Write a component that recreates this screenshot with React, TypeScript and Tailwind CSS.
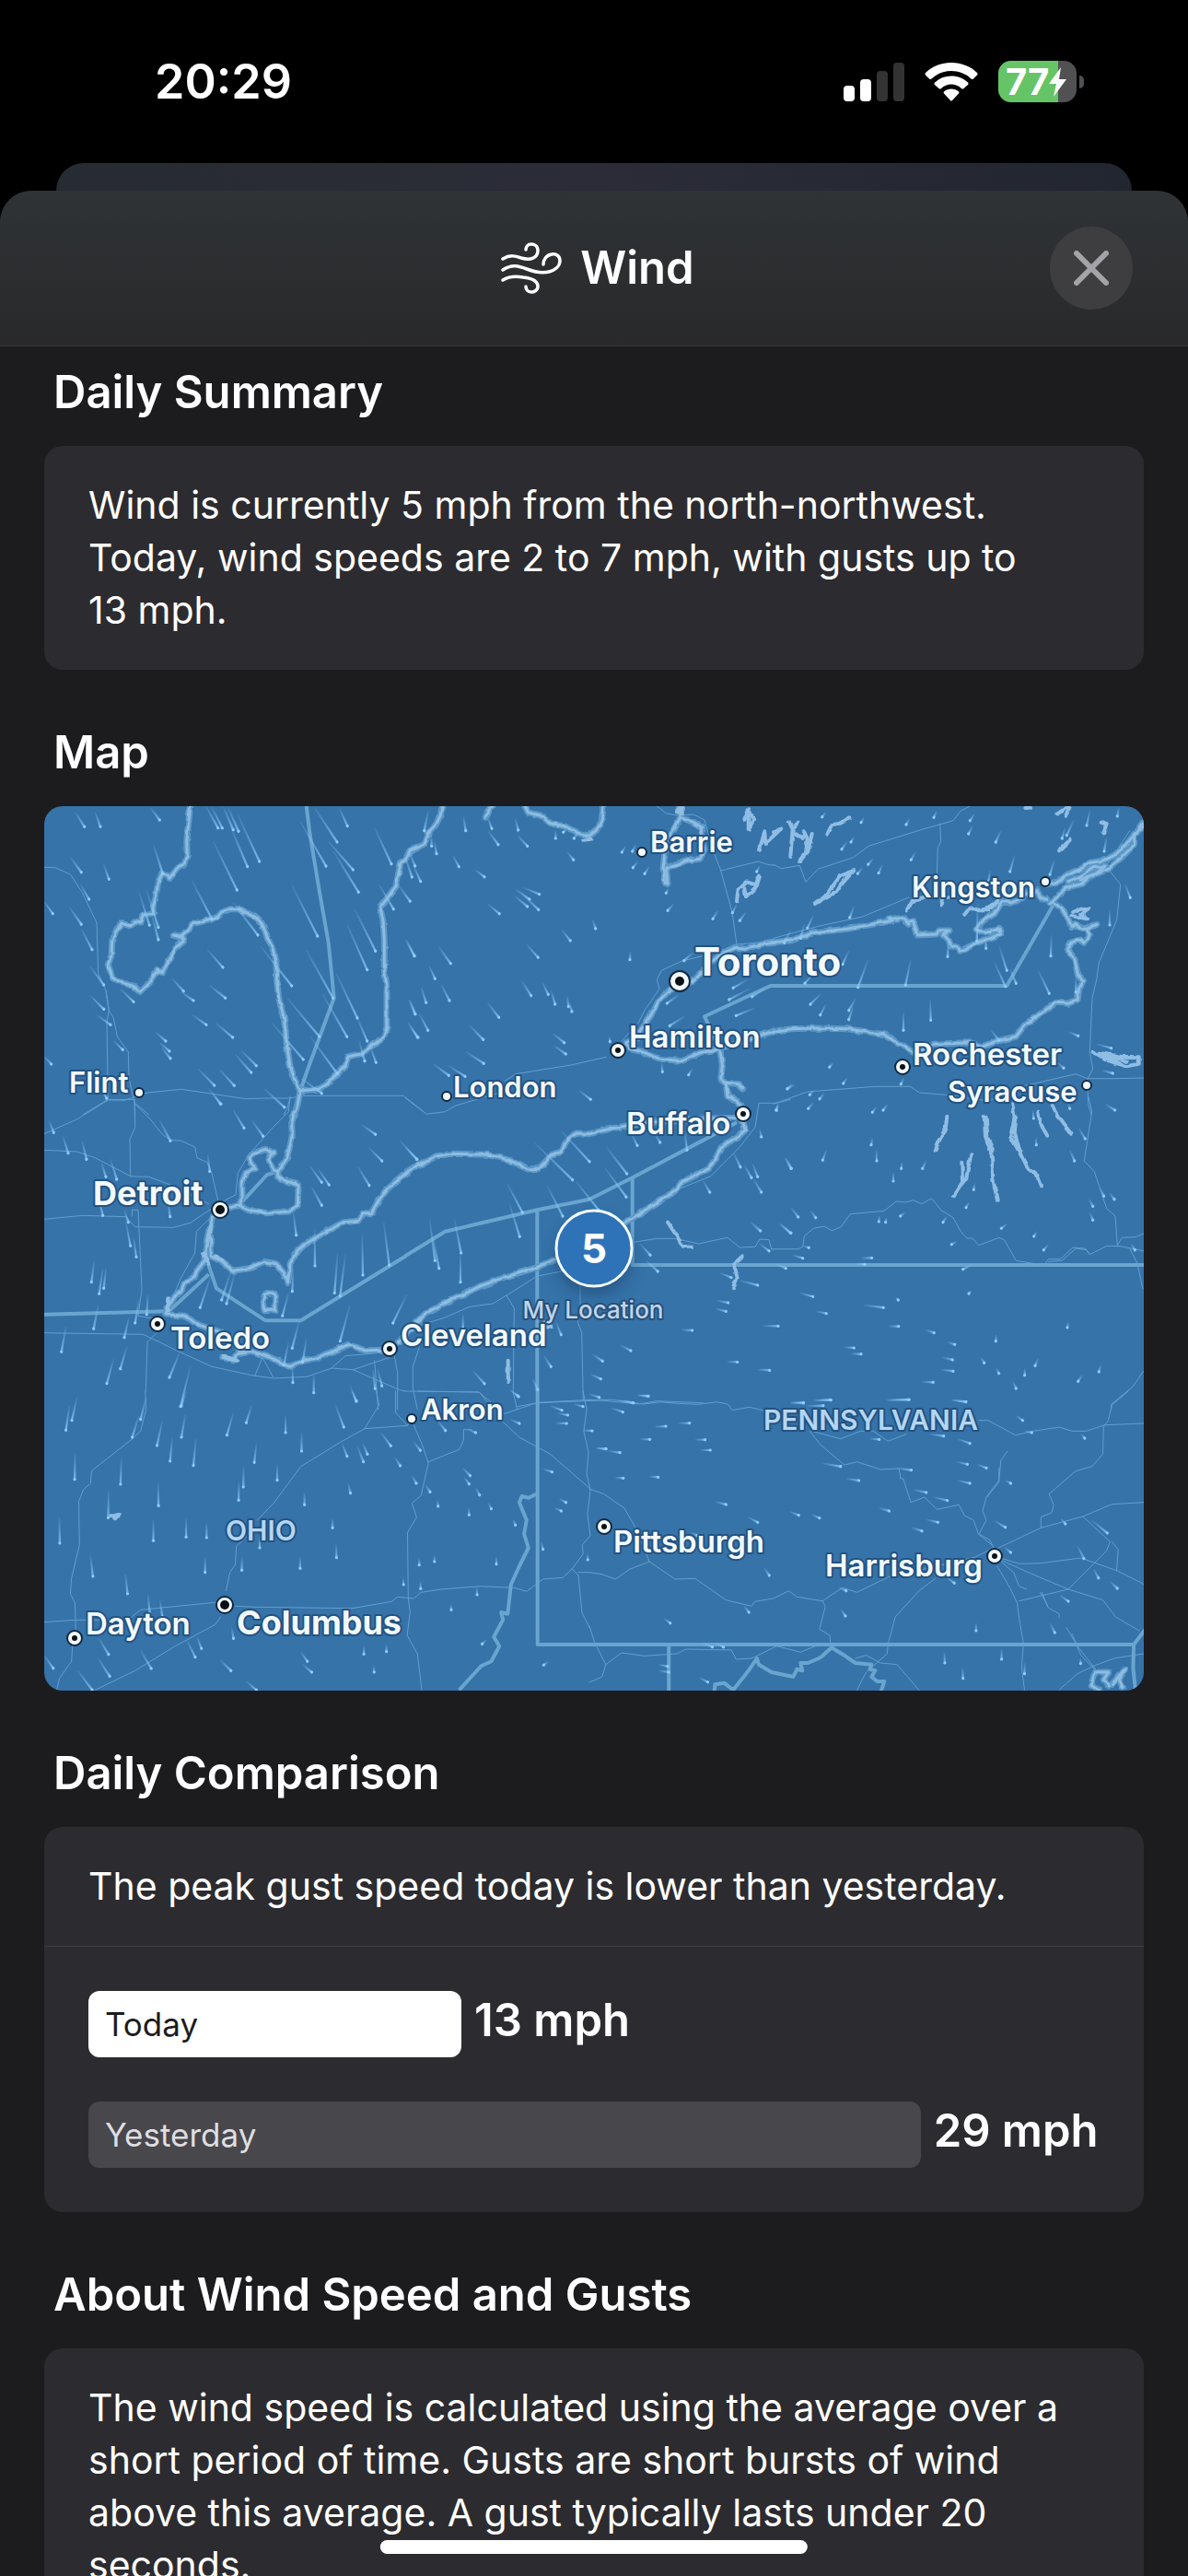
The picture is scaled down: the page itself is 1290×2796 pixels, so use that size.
import React from 'react';

interface Tile {
  x: number;
  y: number;
  sx: number;
  sy: number;
  coasts: string[];
  borders: string[];
  roads: string[];
  lakes: string[];
  streaks: string;
}

interface City {
  name: string;
  x: number;
  y: number;
  size: number;
  weight: number;
  dotX: number;
  dotY: number;
  dotR: number;
}

// The wind map is stored as eight tiles, each with its own origin and scale
const tiles: Tile[] = [
  {
    x: -8,
    y: -5,
    sx: 3,
    sy: 3,
    coasts: [
      '500,15 493,80 488,130 490,175 480,205 465,210 432,250 425,238 408,235 395,262 388,310 378,345 380,362 345,370 338,396 320,392 305,405 275,397 258,420 245,455 243,500 232,530 245,570 275,590 312,600 335,620 365,590 392,550 410,555 430,520 450,480 478,455 472,442 445,435 470,438 495,415 505,400 570,382 590,375 603,360 630,350 655,350 690,365 715,378 735,400 750,440 768,480 780,530 782,590 790,650 805,700 815,800 825,860 840,905 858,942',
      '858,942 920,935 945,920 975,890 1005,860 1015,830 1055,822 1100,790 1130,765 1140,735 1140,600 1132,550 1132,450 1128,390 1118,345 1145,310 1170,275 1185,200 1200,190 1215,160 1240,150 1262,140 1275,105 1300,75 1315,45 1320,15',
    ],
    borders: ['878,15 890,110 920,290 950,460 968,640 885,865 858,942'],
    roads: [
      '24,214 60,215 110,238 150,300 195,395 200,560 225,615 235,680 250,705 262,765 298,815 300,900 318,980 320,1020',
      '225,615 235,680 228,720 232,970 285,973 318,962 360,948 470,937 560,950 680,968 740,966 825,966 865,958 1195,958 1260,1010',
      '232,970 150,1020',
      '318,980 365,1020',
      '825,966 815,1000 805,1020',
    ],
    lakes: [],
    streaks:
      '125,35,155,82 190,35,207,82 370,20,400,60 552,18,590,86 570,18,604,86 608,18,640,92 622,18,657,97 630,80,686,212 655,45,725,195 575,130,652,288 380,140,410,235 110,182,145,230 218,205,235,253 142,270,170,318 24,325,52,365 107,345,145,400 145,415,180,482 333,295,367,403 358,290,396,410 375,370,396,450 505,258,570,382 640,330,720,435 555,482,606,540 728,470,830,600 905,20,978,132 985,20,1012,80 858,65,942,210 950,130,1030,222 965,160,1048,295 1100,85,1155,203 1115,270,1162,350 1180,275,1216,325 1200,180,1222,246 1225,205,1250,260 1215,170,1232,210 830,270,914,438 1035,350,1103,487 1010,400,1076,548 878,485,965,640 975,560,1044,705 1205,450,1230,503 172,535,218,597 172,630,218,676 195,695,240,727 250,780,280,808 272,610,315,652 440,575,478,617 470,620,510,648 562,598,614,640 507,695,552,727 583,722,638,768 386,750,420,780 400,785,432,813 405,800,435,836 525,870,578,924 595,872,643,925 645,822,698,882 665,810,715,860 765,720,868,840 815,640,920,765 930,625,1010,766 1044,705,1076,780 890,765,978,885 1085,795,1105,850 1050,780,1068,845 740,935,806,995 560,935,600,985 860,900,928,950 1212,645,1232,692 1215,730,1242,768 24,830,47,855 200,920,227,966',
  },
  {
    x: 392,
    y: -5,
    sx: 3,
    sy: 3,
    coasts: [
      '262,52 270,30 285,15',
      '390,15 400,35 440,45 475,72 520,80 560,102 600,112 625,92 640,62 645,15',
      '895,15 897,50 875,90 850,130 845,175 840,215 845,265 855,268 850,215 885,205 920,192 960,187 975,155 965,125 968,85 940,68 905,55',
      '1205,460 1160,465 1110,478 1075,475 1040,490 1000,520 960,560 930,590 860,615 825,650 805,690 780,725 755,770 720,785 735,805 780,818 830,838 900,845 960,818 1020,805 1100,780 1160,760 1202,748',
      '1025,805 1033,860 1028,905 1045,920 1050,960 1080,975 1098,995',
      '1045,915 1085,920 1100,935',
    ],
    borders: ['1202,600 1190,600 1120,632 975,700 985,720 1020,800'],
    roads: [
      '820,15 850,38 885,45 940,42 975,60 1000,150 1028,225 1065,360 1080,465',
      '1028,225 1150,195 1180,205 1200,208',
      '1080,465 1160,458 1200,447',
      '1080,475 900,520 835,550 820,580 828,610 780,680 760,720 705,780',
      '655,832 540,858 360,887 325,910',
      '300,950 165,990 130,1010 70,1018 0,965',
    ],
    lakes: [
      '1080,325 1085,285 1110,262 1140,270 1155,242 1145,275 1110,310 1105,280',
      '1105,60 1120,25 1135,60 1118,90 1118,40',
      '1155,155 1170,100 1175,135 1225,88',
      '885,35 905,20 905,40',
      '580,125 605,122',
    ],
    streaks:
      '75,30,62,95 190,48,197,95 268,50,282,88 358,55,368,93 85,110,86,145 95,130,102,170 270,95,303,140 365,110,398,145 155,175,175,212 228,222,258,245 528,165,548,190 385,280,437,302 358,285,405,318 357,308,398,342 385,305,434,352 270,335,307,365 610,385,620,414 510,418,538,453 395,465,433,508 0,450,30,502 108,472,148,527 78,535,97,577 117,595,144,648 52,605,68,655 15,645,33,692 45,690,74,745 10,720,40,768 733,488,732,515 380,585,410,632 447,590,466,628 475,615,488,660 528,635,532,668 535,655,543,684 268,655,305,703 208,728,254,775 198,815,256,853 92,855,142,892 140,860,195,895 480,755,518,785 485,795,523,822 565,940,604,970 665,765,667,782 718,145,706,165 752,140,740,162 758,195,742,215 795,212,780,235 858,283,850,298 875,333,855,355 1020,355,1002,382 1110,360,1090,388 1155,210,1145,228 1080,335,1066,362 940,490,908,518 1115,580,1068,607 890,630,853,657 910,700,862,730 1140,672,1078,697 1170,610,1130,635 1120,610,1055,645 835,850,838,880 935,870,923,890 1260,920,1245,935 490,95,490,120 530,88,515,100 560,105,550,120',
  },
  {
    x: 792,
    y: -5,
    sx: 3,
    sy: 3,
    coasts: [
      '0,458 60,452 90,440 140,425 240,415 310,402 385,388 375,378 400,385 425,378 440,400 430,392 455,392 470,435 530,432 540,420 570,420 555,435 570,450 580,475 595,472 610,487 650,465 740,432 735,412 705,425 660,420 680,390 720,365 745,325 775,330 810,318 815,300 860,290 870,318 890,318',
      '890,270 930,260 950,240 1000,220 1030,200 1080,190 1110,175 1150,140 1205,65',
      '900,330 940,300 950,280 1000,270 1030,245 1090,220 1130,185 1175,140 1175,110 1205,75',
      '960,260 1000,245 1040,215 1080,210 1050,235 1000,255',
      '915,330 940,350 960,385 970,410 985,400 1010,415 1050,400 1020,415 1030,435 1010,460 1000,450 965,460 955,480 980,510 990,560 1010,585 995,610 990,645 960,658 920,655 870,690 820,725 790,765 730,780 680,798 640,785 520,790 460,820 430,800 380,770 360,758 240,740 130,738 60,740 0,748',
    ],
    borders: ['0,600 760,600 915,330'],
    roads: [
      '0,205 25,218 85,208 105,262 145,220 260,182 310,145 480,92 585,62 610,30 640,15',
      '542,72 545,130 535,150 532,240',
      '0,445 150,405 290,375 440,312',
      '1090,220 1130,270 1118,385 1060,525 1052,580 1038,640 1030,815 1040,870 1022,905 1025,985 1035,1020',
      '0,985 110,945 330,928 445,928 475,948 560,955 700,975 820,925 985,887 1022,902 1110,902 1205,900',
      '1080,215 1160,95',
    ],
    lakes: [
      '135,333 175,300 215,245 262,225 225,265 205,295 160,320 135,333',
      '175,107 190,75 215,72 250,55',
      '50,65 62,90 55,180',
      '78,65 62,100 95,120 100,100 110,120 105,170 85,195',
      '110,170 125,105',
      '0,100 18,90',
      '435,352 450,325 490,315',
      '622,368 640,345 660,355 690,350 730,325 700,355 670,355',
      '545,338 550,315 575,310',
      '975,360 1000,350 1025,352 1000,370 1020,382 970,372',
      '925,40 950,22 965,20 950,48',
      '1067,68 1085,75 1075,103',
      '930,160 965,125 940,155',
      '1040,815 1080,840 1150,862 1190,855 1190,832 1130,830 1060,818 1080,832 1150,845',
      '820,18 840,20',
    ],
    streaks:
      '170,35,158,50 295,52,285,68 263,115,252,132 240,130,222,155 443,55,432,75 532,30,522,52 655,40,640,62 648,80,635,105 740,95,724,132 462,165,448,190 325,185,308,205 290,215,274,235 355,205,342,233 785,175,770,228 705,225,700,260 263,340,248,378 130,370,110,412 1030,30,1020,78 1125,20,1120,48 978,60,955,110 950,85,940,120 1085,115,1077,162 915,190,900,238 1145,270,1162,313 1095,355,1095,402 905,435,903,503 735,470,760,550 720,525,755,602 770,545,790,592 862,550,898,625 308,515,275,605 447,515,430,598 130,560,102,592 245,485,225,530 155,625,120,660 170,660,152,695 268,640,245,680 260,665,245,710 510,645,512,712 423,685,423,745 708,745,735,778 960,750,992,763 1052,790,1100,803 925,850,945,868 1070,875,1105,885 195,850,182,865 240,900,227,918 425,900,415,920 70,920,45,935 130,940,118,955 165,950,150,968 960,985,965,1000 665,330,662,455 570,450,567,505 690,430,692,478 55,420,35,460 100,400,88,445 985,570,985,620',
  },
  {
    x: -8,
    y: 315,
    sx: 3,
    sy: 3,
    coasts: [
      '858,-18 850,25 830,85 832,130 815,200 785,245',
      '785,245 770,240 755,205 770,185 745,172 705,185 692,200 710,235 680,250 668,285 670,330 658,355 690,370 750,380 820,375 850,355 852,290 840,285 820,278 800,272 785,262 785,245',
      '658,355 620,365 575,390 560,440 550,500 552,530',
      '572,400 565,450 568,520',
      '560,440 552,480 545,540',
      '568,520 590,530 640,568 690,560 740,538 780,545 800,570 818,605 825,545 850,500 900,465 970,425 1000,410 1050,405 1065,380 1090,380 1115,335 1150,295 1220,235 1260,215',
      '552,530 535,550 520,570 515,585 480,610 470,635 450,650 425,690 420,710 480,715 530,745 590,765 640,790 660,830 700,830 760,850 825,880 870,860 920,850 1015,808 1070,828 1130,825',
      '605,850 640,860 650,840 680,835',
      '742,645 775,640 778,695 742,698 735,670 742,645',
      '1180,800 1240,740 1260,715',
    ],
    borders: ['24,710 420,700 435,695 560,580', '558,545 585,625 745,730 860,730 1202,520', '658,355 750,255 785,245'],
    roads: [
      '24,122 130,75 232,12 318,10',
      '24,175 130,180 190,200 305,260 365,262 440,290 560,350',
      '318,10 320,100 303,140 305,260',
      '320,25 370,75 410,125 435,142 470,145 515,165 522,200 555,215 570,250 590,340',
      '825,0 820,50 770,100 690,190 655,250 648,320 600,345',
      '24,400 150,388 290,392 320,425 445,427 500,412 540,385 570,365',
      '310,390 310,370 330,370 342,630 330,715 390,725',
      '575,385 520,440 515,510 470,590 440,660',
      '24,770 345,775 400,800 450,825 570,880 700,908 770,918 880,913 960,885 1030,890 1150,850',
      '390,770 360,800 355,960',
      '710,910 735,850 770,915',
      '960,885 1005,845 1120,835',
      '1030,890 1180,955 1200,960',
      '1100,860 1112,1020',
      '1165,845 1175,900 1175,1020',
    ],
    lakes: ['540,515 560,545', '585,520 600,535', '430,655 428,700', '610,845 655,862'],
    streaks:
      '40,80,55,118 85,130,102,185 147,145,162,205 210,215,225,262 240,205,260,270 198,320,215,388 285,370,298,410 428,345,434,392 290,410,305,487 315,460,324,523 400,78,435,145 557,190,563,245 578,0,598,25 640,45,675,103 700,78,737,130 1057,92,1103,124 1080,165,1124,210 1183,145,1238,205 1045,228,1083,290 888,225,928,280 915,235,952,288 895,295,928,355 835,375,845,452 905,430,906,552 1060,450,1062,582 1130,410,1148,550 980,510,970,640 1005,515,988,650 835,560,832,635 820,640,800,715 565,590,532,688 630,575,602,663 645,575,618,675 187,535,178,605 215,560,203,643 225,560,218,625 200,680,185,757 362,645,358,710 333,660,320,738 95,750,80,832 300,720,285,785 293,815,272,887 250,855,228,935 465,835,432,915 500,880,468,1010 1020,680,988,797 1205,645,1160,738 855,730,832,820 820,800,805,875 878,790,866,865 833,885,834,932 902,905,902,965 1022,945,1040,993 1095,890,1102,952 1110,890,1124,943',
  },
  {
    x: 392,
    y: 315,
    sx: 3,
    sy: 3,
    coasts: [
      '50,225 100,195 150,187 270,190 340,208 400,237 435,235 460,210 475,190 490,185 510,182 520,155 535,135 560,120 600,122 640,112 720,95 800,85 900,75 1000,72 1075,70 1098,60',
      '1098,80 1108,110 1080,135 1030,165 1015,195 990,235 950,255 900,280 885,300 860,320 790,365 715,412',
      '490,530 420,560 320,590 240,620 180,650 115,680 70,705 35,735',
    ],
    borders: ['0,520 130,440 430,370 600,335 740,265 1080,85', '430,370 430,960', '740,265 740,549 1202,549'],
    roads: [
      '1255,10 1210,22 1152,22 1140,100 1090,165 995,260 900,298 715,415',
      '745,475 820,463 880,463 955,480 1050,460 1090,492 1140,490 1155,465 1185,467 1193,498 1202,497',
      '570,615 570,680 562,735 575,770 580,990',
      '50,745 130,720 210,685 285,675 335,645 430,585 520,568',
      '330,648 355,690 352,965 365,1020',
      '0,960 240,963 290,1005',
      '365,1010 430,998 640,990 760,1002 820,992 970,998',
      '45,820 25,880 25,950 40,1020',
    ],
    lakes: ['855,410 885,455 905,488 935,488', '1097,522 1070,545 1082,590 1068,625', '335,860 335,930', '450,745 478,750 455,735'],
    streaks:
      '0,165,38,205 420,150,545,272 508,112,600,212 655,165,722,252 650,232,720,328 738,125,756,160 815,125,830,150 910,110,918,175 555,275,630,370 462,290,513,390 333,285,382,378 340,350,373,457 80,400,97,535 90,455,110,560 160,400,182,510 180,510,180,605 1155,108,1160,132 1070,185,1092,230 1105,225,1128,265 1132,220,1148,262 1135,270,1160,312 970,275,992,312 1238,200,1258,235 1125,410,1157,438 1220,415,1255,445 1155,480,1185,503 765,480,798,517 785,535,823,570 1205,545,1240,560 1025,575,1062,590 1090,600,1148,615 1015,665,1052,672 1012,692,1045,700 1165,748,1215,748 900,760,935,762 1048,865,1082,865 1148,890,1187,892 700,810,735,828 610,840,643,862 605,905,637,920 188,710,188,755 492,735,508,776 452,845,475,880 220,893,258,935 415,920,432,955 340,955,367,975 600,970,632,980 755,975,790,976 710,990,743,998 1215,25,1210,45',
  },
  {
    x: 792,
    y: 315,
    sx: 3,
    sy: 3,
    coasts: [],
    borders: ['0,549 1230,549'],
    roads: [
      '0,497 80,497 95,490 100,455 130,430 165,423 190,437 220,425 250,383 360,373 400,342 430,345 455,338 482,350 515,332 545,370 585,395 610,440 630,462 648,462 668,485 735,460 752,468 790,535 870,548 885,545 895,530 935,530 975,492 1015,495 1030,515 1085,487 1130,488 1205,503',
      '895,538 940,535 985,495 1020,500 1030,515',
      '1025,0 1037,48 1012,210 1045,245 1085,365 1113,390 1120,485 1135,460 1180,458 1205,447',
      '1160,495 1185,545 1203,627',
      '1205,895 1170,945 1100,1003 1100,1020',
    ],
    lakes: [
      '565,65 560,105 540,140 527,178',
      '643,190 628,265 610,290 588,325',
      '613,215 615,275',
      '686,65 690,130 710,185 715,270 728,335',
      '692,65 697,130 715,180',
      '778,25 785,70 772,130 800,180 825,230 860,258 873,292',
      '790,70 785,120 803,180',
      '862,50 870,90 892,128',
      '908,30 925,65 970,122',
    ],
    streaks:
      '15,25,8,45 130,20,113,40 335,35,322,52 372,25,357,45 1080,25,1112,45 322,135,318,158 172,175,160,208 38,200,57,235 335,175,336,210 418,215,416,235 498,210,485,235 390,248,390,276 57,362,80,393 122,373,137,395 22,415,57,445 345,388,343,408 368,395,365,410 428,378,413,390 565,390,552,410 597,472,580,482 760,415,742,430 858,440,848,456 895,482,880,500 655,283,652,304 637,345,627,362 62,517,95,527 97,487,115,493 285,527,320,526 268,547,297,547 650,547,617,563 645,633,636,642 85,640,128,652 140,700,172,707 398,655,406,663 295,680,358,688 375,748,407,749 228,817,262,819 252,838,285,839 495,760,523,770 568,800,590,808 550,850,583,858 547,890,585,895 483,930,520,931 725,775,724,797 960,735,957,753 675,850,686,868 725,885,734,902 818,885,818,908 862,855,852,877 1066,875,1060,897 1005,908,992,928 780,930,790,951 135,990,187,989 55,998,97,999 368,990,440,988 580,990,627,994 855,135,856,158 845,45,847,72 995,105,1015,138 965,175,980,210 1028,335,1040,358 1030,378,1040,403 1095,315,1110,335 1065,300,1076,325 1165,480,1177,500',
  },
  {
    x: -8,
    y: 635,
    sx: 2.529,
    sy: 3,
    coasts: [],
    borders: [
      '1375,0 1375,825 1518,825',
      '1372,335 1350,347 1332,342 1325,362 1345,420 1338,465 1350,510 1325,570 1302,630 1293,725 1275,720 1280,745 1255,800 1270,830 1248,880 1220,895 1160,973',
    ],
    roads: [
      '298,0 300,60 285,130 262,155 150,260 148,300 128,320 115,360 117,500 95,610 92,660 105,690 107,780',
      '98,830 95,880 62,935 55,973',
      '20,752 107,745 250,745 285,712 490,688',
      '545,700 600,703 865,707 975,685 990,670 1035,675 1055,655 1110,645 1220,635 1310,640 1345,652 1390,612 1445,607 1470,578 1500,530 1498,500 1520,470 1512,400 1520,320 1510,270 1515,200 1502,130 1510,60 1500,0',
      '520,650 530,590 545,565 548,505 580,470',
      '605,420 650,365 725,245 835,165 900,122 1018,112 1025,95',
      '900,122 940,45 932,0',
      '505,735 490,760 380,830 270,910 160,973',
      '1035,110 1060,180 1075,235 1055,340 1030,365 1043,410 1018,460 1020,675 1025,720 1017,795 1045,855 1057,973',
      '1075,230 1160,190 1172,160 1172,125 1195,125',
      '1280,75 1375,37 1520,28',
      '1280,100 1325,150 1410,205 1520,318',
      '1470,578 1487,600 1497,720 1518,770',
      '1487,590 1518,590',
      '985,0 985,70 1018,112',
      '1045,0 1215,3 1240,40',
    ],
    lakes: ['203,408 225,402 215,415 205,405'],
    streaks:
      '90,45,80,127 110,20,96,95 300,20,285,92 280,80,262,150 410,0,397,48 590,45,575,103 540,70,522,143 345,95,330,177 408,75,397,150 372,150,366,228 437,155,430,242 683,80,683,135 820,45,843,117 865,0,878,32 727,135,727,195 603,170,597,232 838,170,852,212 105,200,104,287 232,220,230,303 880,180,897,230 895,170,908,205 945,135,972,178 983,215,998,243 568,245,567,312 660,240,660,290 555,295,554,355 333,300,334,373 735,330,735,370 855,300,861,332 197,325,196,412 62,410,63,495 320,420,320,487 410,415,410,475 466,430,466,477 812,415,812,445 822,500,823,542 723,540,723,577 563,540,563,583 462,540,462,590 612,470,612,510 147,535,154,603 243,595,249,660 305,660,310,722 338,680,345,735 535,770,540,805 170,805,197,857 440,800,452,838 412,810,435,866 285,845,314,903 503,875,533,910 725,850,743,880 730,890,755,915 168,870,200,928 112,910,152,973 20,860,45,902 575,945,603,973 898,830,898,856 960,825,960,848 925,895,926,915 1100,95,1122,128 1035,165,1053,193 1030,275,1042,300 1170,250,1190,275 1173,280,1187,302 1205,315,1216,338 1068,305,1080,328 1100,355,1102,375 1186,380,1187,403 1240,365,1248,383 1050,545,1050,566 1092,535,1092,555 1262,540,1262,563 1006,610,1007,630 1053,620,1054,643 1208,640,1209,663 1385,490,1390,515 1308,418,1314,436 1137,695,1138,712 1512,530,1513,549 1410,48,1442,62 1430,72,1458,78 1425,104,1455,105 1500,128,1525,129 1535,185,1562,188 1390,253,1415,263 1435,350,1453,362 1422,380,1440,390 1300,92,1325,105 1185,125,1205,135 1475,42,1500,50 1310,5,1323,18 1235,810,1223,823 1405,880,1392,892',
  },
  {
    x: 592,
    y: 635,
    sx: 2.529,
    sy: 3,
    coasts: ['1400,973 1378,955 1390,915 1425,915 1412,940 1425,960', '1435,955 1470,905 1455,940 1465,965'],
    borders: [
      '0,825 1495,825 1530,770',
      '1495,825 1493,900 1500,980',
      '218,825 218,980',
      '343,980 345,955 370,950 395,973 440,905 460,870 465,890 500,915 560,930 570,905 585,910 580,885 600,885 630,870 640,862 665,835 700,860 730,885 775,890 770,905 785,910 775,930 790,945 810,945 800,980',
    ],
    roads: [
      '0,28 65,28 150,42 195,35 240,40 300,43 350,35 380,42 392,62 440,52 485,65',
      '0,590 30,595 72,612 110,580 165,555 235,612 290,610 375,680 445,700 455,685 505,675 547,650 570,670 640,683 695,640 735,655 830,600 900,585 1060,540 1110,510',
      '0,318 40,335 95,380 125,440 165,555',
      '605,130 635,175 700,240 735,230 800,255 850,252 855,285 862,285 883,362 920,345 955,385 1015,370 1030,405 1055,420 1068,465 1105,500',
      '610,130 690,155 745,130 780,130 820,163 870,140',
      '1070,95 1095,95 1170,143 1220,130 1290,117 1325,130 1365,130 1415,110 1522,105',
      '1480,0 1435,45 1425,95 1412,115 1410,205 1380,245 1335,260 1262,335 1275,370 1270,395 1240,410 1240,445',
      '1115,515 1240,445 1355,408 1435,368 1522,362',
      '1355,408 1430,490 1420,520 1315,645 1180,683',
      '1120,540 1180,562 1240,560 1350,543 1450,585 1522,628',
      '1435,490 1452,515 1448,585',
      '1120,545 1235,605 1315,645 1410,680 1445,735 1510,780',
      '1120,570 1155,640 1175,690 1180,740 1192,820 1187,900 1195,973',
      '950,610 905,650 840,735 820,825 818,855 760,915 735,973',
      '640,683 648,700 632,775 660,795 663,830',
      '0,765 15,820 45,890 35,930 0,948',
      '45,890 88,852 150,862 240,855 265,840 390,843 403,873 445,870 515,830 580,850 620,830 663,828',
      '730,870 760,860 800,885 845,890 905,973',
      '1290,973 1340,920 1385,895 1440,870 1522,855',
      '1148,195 1130,225 1125,290 1090,345 1080,390 1090,420 1070,465 1100,485 1112,515',
      '1130,555 1165,590 1180,635 1200,645',
      '1238,655 1255,690 1260,705 1290,725 1290,738',
      '1310,770 1335,820 1350,860 1390,910',
      '1325,790 1340,830 1390,905',
      '1243,655 1258,700',
      '1125,250 1125,295 1092,345',
    ],
    lakes: [],
    streaks:
      '60,55,92,68 245,104,275,104 180,116,210,114 552,38,588,37 595,48,642,47 615,30,662,28 815,28,878,27 995,28,1033,35 135,12,162,16 80,30,120,38 140,157,166,157 290,158,318,158 305,192,332,192 20,185,46,188 52,195,84,200 70,282,93,283 165,278,189,280 640,235,690,245 705,285,740,291 770,155,796,157 935,140,973,146 1010,155,1045,170 1010,230,1038,238 1065,238,1090,250 845,250,884,257 1010,290,1045,300 1142,290,1157,300 890,320,925,330 945,345,983,356 795,380,823,390 345,360,375,369 550,392,575,404 610,402,632,413 435,410,462,427 885,445,913,455 925,418,957,427 1113,422,1142,443 1172,80,1190,95 1195,130,1215,135 1350,140,1360,153 1295,415,1307,432 1380,420,1422,462 1340,503,1358,545 1140,508,1157,525 1385,580,1398,608 1430,620,1450,642 1292,665,1315,684 480,575,494,600 980,605,1002,625 685,640,705,650 690,710,703,732 425,700,438,720 205,740,222,755 1062,755,1062,780 1265,755,1278,786 1132,840,1132,873 975,850,976,885 1025,900,1026,935 1195,885,1195,920 1348,870,1349,887 310,820,338,833 345,818,368,833 190,890,215,896 190,910,218,915 302,933,325,947 280,460,296,470',
  },
];

const cities: City[] = [
  { name: 'Flint', x: 27, y: 311, size: 31, weight: 600, dotX: 103, dotY: 311, dotR: 5 },
  { name: 'Barrie', x: 658, y: 50, size: 31, weight: 600, dotX: 649, dotY: 50, dotR: 5 },
  { name: 'Kingston', x: 942, y: 99, size: 31, weight: 600, dotX: 1087, dotY: 82, dotR: 5 },
  { name: 'London', x: 444, y: 316, size: 31, weight: 600, dotX: 437, dotY: 315, dotR: 5 },
  { name: 'Syracuse', x: 981, y: 321, size: 31, weight: 600, dotX: 1132, dotY: 303, dotR: 5 },
  { name: 'Akron', x: 409, y: 666, size: 31, weight: 600, dotX: 399, dotY: 665, dotR: 5 },
  { name: 'Hamilton', x: 635, y: 262, size: 33, weight: 600, dotX: 623, dotY: 265, dotR: 8 },
  { name: 'Rochester', x: 943, y: 281, size: 33, weight: 600, dotX: 932, dotY: 283, dotR: 8 },
  { name: 'Buffalo', x: 632, y: 356, size: 33, weight: 600, dotX: 759, dotY: 334, dotR: 8 },
  { name: 'Toledo', x: 137, y: 589, size: 33, weight: 600, dotX: 123, dotY: 562, dotR: 8 },
  { name: 'Cleveland', x: 387, y: 586, size: 33, weight: 600, dotX: 375, dotY: 589, dotR: 8 },
  { name: 'Dayton', x: 45, y: 899, size: 33, weight: 600, dotX: 33, dotY: 903, dotR: 8 },
  { name: 'Pittsburgh', x: 618, y: 810, size: 33, weight: 600, dotX: 608, dotY: 782, dotR: 8 },
  { name: 'Harrisburg', x: 848, y: 836, size: 33, weight: 600, dotX: 1032, dotY: 814, dotR: 8 },
  { name: 'Detroit', x: 53, y: 433, size: 36, weight: 700, dotX: 191, dotY: 438, dotR: 9 },
  { name: 'Columbus', x: 209, y: 899, size: 36, weight: 700, dotX: 196, dotY: 867, dotR: 9 },
  { name: 'Toronto', x: 706, y: 184, size: 42, weight: 700, dotX: 690, dotY: 190, dotR: 11 },
];

const gusts = [
  { day: 'Today', speed: 13, barClass: 'bg-white text-[#1c1c1e]' },
  { day: 'Yesterday', speed: 29, barClass: 'bg-[#48474c] text-[#dedee0]' },
];

const maxGust = 29;

// Tile coordinates -> map coordinates
const project = (tile: Tile, line: string) =>
  line
    .split(' ')
    .map((pair) => {
      const [x, y] = pair.split(',').map(Number);
      return `${(x / tile.sx + tile.x).toFixed(1)},${(y / tile.sy + tile.y).toFixed(1)}`;
    })
    .join(' ');

const collect = (key: 'coasts' | 'borders' | 'roads' | 'lakes') =>
  tiles.flatMap((tile) => tile[key].map((line) => project(tile, line)));

const streaks = tiles.flatMap((tile) =>
  tile.streaks.split(' ').map((item) => {
    const [x1, y1, x2, y2] = item.split(',').map(Number);
    const dx = (x2 - x1) / tile.sx;
    const dy = (y2 - y1) / tile.sy;
    return {
      x: x2 / tile.sx + tile.x,
      y: y2 / tile.sy + tile.y,
      length: Math.hypot(dx, dy),
      angle: (Math.atan2(dy, dx) * 180) / Math.PI,
    };
  })
);

const Lines = ({ lines }: { lines: string[] }) => (
  <>
    {lines.map((points, i) => (
      <polyline key={i} points={points} />
    ))}
  </>
);

const WindMap = () => {
  const coasts = collect('coasts');
  const borders = collect('borders');
  const roads = collect('roads');
  const lakes = collect('lakes');

  return (
    <svg viewBox="0 0 1194 960" className="block w-full" role="img" aria-label="Wind map">
      <defs>
        <linearGradient id="tail" x1="0" y1="0" x2="1" y2="0">
          <stop offset="0" stopColor="#86c6f5" stopOpacity="0.1" />
          <stop offset="1" stopColor="#86c6f5" stopOpacity="0.8" />
        </linearGradient>
        <filter id="rough" x="0" y="0" width="1194" height="960" filterUnits="userSpaceOnUse">
          <feTurbulence type="fractalNoise" baseFrequency="0.1" numOctaves="2" seed="4" />
          <feDisplacementMap in="SourceGraphic" scale="4" xChannelSelector="R" yChannelSelector="G" />
        </filter>
        <filter id="soft" x="-50%" y="-50%" width="200%" height="200%">
          <feGaussianBlur stdDeviation="9" />
        </filter>
      </defs>

      <rect width="1194" height="960" fill="#3573a9" />

      <g fill="none" strokeLinejoin="round" strokeLinecap="round">
        <g stroke="#639fd0" strokeWidth="1">
          <Lines lines={roads} />
        </g>
        <g stroke="#6aa5cf" strokeWidth="4" strokeLinecap="butt">
          <Lines lines={borders} />
        </g>
        <g filter="url(#rough)">
          <g stroke="#5b98c8" strokeWidth="7">
            <Lines lines={coasts} />
          </g>
          <g stroke="#8dbce0" strokeWidth="3">
            <Lines lines={coasts} />
          </g>
          <g stroke="#8fbde4" strokeWidth="4">
            <Lines lines={lakes} />
          </g>
        </g>
      </g>

      {streaks.map((s, i) => (
        <g key={i} transform={`translate(${s.x.toFixed(1)} ${s.y.toFixed(1)}) rotate(${s.angle.toFixed(1)})`}>
          <path d={`M${-s.length.toFixed(1)} -0.8 L0 -1.2 L0 1.2 L${-s.length.toFixed(1)} 0.8 Z`} fill="url(#tail)" />
          <circle r="1.6" fill="#8fcdfb" />
        </g>
      ))}

      <g fontFamily="Inter, sans-serif" stroke="#24527f" strokeWidth="4" strokeLinejoin="round" paintOrder="stroke">
        <text x="197" y="797" fontSize="30" fontWeight="600" fill="#b3d6f3">
          OHIO
        </text>
        <text x="781" y="677" fontSize="30" fontWeight="600" fill="#b3d6f3">
          PENNSYLVANIA
        </text>
        {cities.map((city) => (
          <text key={city.name} x={city.x} y={city.y} fontSize={city.size} fontWeight={city.weight} fill="#f2faff">
            {city.name}
          </text>
        ))}
      </g>

      {cities.map((city) => (
        <g key={city.name}>
          <circle cx={city.dotX} cy={city.dotY} r={city.dotR} fill="#f2faff" stroke="#12283f" strokeWidth="2" />
          {city.dotR > 5 && <circle cx={city.dotX} cy={city.dotY} r={city.dotR > 8 ? 5 : 3} fill="#0c1116" />}
        </g>
      ))}

      {/* current location */}
      <circle cx="597" cy="490" r="40" fill="#1a3f66" opacity="0.6" filter="url(#soft)" />
      <circle cx="597" cy="480" r="41" fill="#2e72b8" stroke="#f2faff" strokeWidth="3" />
      <text x="597" y="496" textAnchor="middle" fontFamily="Inter, sans-serif" fontSize="44" fontWeight="700" fill="#fff">
        5
      </text>
      <text
        x="596"
        y="556"
        textAnchor="middle"
        fontFamily="Inter, sans-serif"
        fontSize="26"
        fontWeight="500"
        fill="#bfd5ec"
        stroke="#2a4f76"
        strokeWidth="4"
        strokeLinejoin="round"
        paintOrder="stroke"
      >
        My Location
      </text>
    </svg>
  );
};

const StatusBar = () => (
  <div className="flex h-[177px] shrink-0 items-center justify-between pr-[113px] pl-[168px]">
    <span className="text-[52px] leading-none font-semibold">20:29</span>
    <div className="flex items-center gap-[22px]">
      <svg viewBox="0 0 66 42" className="h-[42px] w-[66px]" aria-label="Signal">
        <rect x="0" y="25" width="12" height="17" rx="4" fill="#fff" />
        <rect x="18" y="18" width="12" height="24" rx="4" fill="#fff" />
        <rect x="36" y="9" width="12" height="33" rx="4" fill="#333" />
        <rect x="54" y="0" width="12" height="42" rx="4" fill="#333" />
      </svg>
      <svg viewBox="0 0 58 42" className="h-[42px] w-[58px]" aria-label="Wi-Fi">
        <path d="M29 0 C40 0 50 4 57 11 Q58 12.500 57 13.500 L53 17.500 Q52 18.500 50.500 17.500 C45 12 37 9 29 9 C21 9 13 12 7.500 17.500 Q6 18.500 5 17.500 L1 13.500 Q0 12.500 1 11 C8 4 18 0 29 0Z" fill="#fff" />
        <path d="M29 14.500 C36 14.500 42 17 47 21.500 Q48 22.500 47 24 L42.500 28 Q41.500 29 40 28 C37 25 33 23.500 29 23.500 C25 23.500 21 25 18 28 Q16.500 29 15.500 28 L11 24 Q10 22.500 11 21.500 C16 17 22 14.500 29 14.500Z" fill="#fff" />
        <path d="M29 28.500 C32 28.500 35 29.500 37 31.500 Q38 32.500 37 33.500 L30 41 Q29 42 28 41 L21 33.500 Q20 32.500 21 31.500 C23 29.500 26 28.500 29 28.500Z" fill="#fff" />
      </svg>
      <div className="flex items-center gap-[3px]">
        <div className="relative h-[45px] w-[85px] overflow-hidden rounded-[14px] bg-[#515153]">
          <div className="h-full w-[77%] bg-[#65c466]" />
          <div className="absolute inset-0 flex items-center pl-2">
            <span className="text-[40px] leading-none font-bold">77</span>
            <svg viewBox="0 0 20 32" className="h-8 w-5" fill="#fff" aria-label="Charging">
              <path d="M13 0 L0 18 H8 L5 32 L19 13 H11 Z" />
            </svg>
          </div>
        </div>
        <div className="h-[14px] w-[5px] rounded-r-full bg-[#515153]" />
      </div>
    </div>
  </div>
);

const WindIcon = () => (
  <svg
    viewBox="0 0 66 56"
    className="h-14 w-[66px]"
    fill="none"
    stroke="#fff"
    strokeWidth="3.5"
    strokeLinecap="round"
    aria-hidden="true"
  >
    <path d="M2 18 C10 13 16 15 22 17 C32 20 40 17 40 9 C40 4 36 2 33 2 C29 2 27 5 27 8" />
    <path d="M2 30 C12 23 20 26 28 29 C36 32 44 34 52 32 C60 30 64 25 64 20 C64 15 60 12 55 13 C49 14 46 19 46 24" />
    <path d="M2 41 C10 36 18 37 24 38 C34 39 40 42 40 48 C40 52 36 54 33 54 C29 54 27 51 27 48" />
  </svg>
);

const Section = ({ title, children }: { title: string; children: React.ReactNode }) => (
  <section className="flex flex-col gap-7">
    <h2 className="pl-[10px] text-[49px] leading-[60px] font-semibold">{title}</h2>
    <div className="overflow-hidden rounded-[20px] bg-[#2c2b2f]">{children}</div>
  </section>
);

const App: React.FC = () => {
  return (
    <div className="relative flex h-screen flex-col overflow-hidden bg-black font-['Inter',sans-serif] text-white">
      <StatusBar />
      <div className="mx-[61px] h-[30px] shrink-0 rounded-t-[30px] bg-linear-to-r from-[#272b33] via-[#2b2c37] to-[#222631]" />

      <div className="flex-1 overflow-hidden rounded-t-[34px] bg-[#1c1c1e]">
        <header className="grid h-[169px] grid-cols-[1fr_auto_1fr] items-center border-b border-[#3a3a3c] bg-linear-to-b from-[#2f3336] to-[#29292b] px-[60px]">
          <span />
          <div className="flex items-center gap-5 pl-2">
            <WindIcon />
            <h1 className="text-[49px] leading-[60px] font-semibold">Wind</h1>
          </div>
          <button
            type="button"
            aria-label="Close"
            className="flex size-[90px] items-center justify-center justify-self-end rounded-full bg-[#3e3e41]"
          >
            <svg viewBox="0 0 38 38" className="size-[38px]" stroke="#a3a3a8" strokeWidth="6" strokeLinecap="round">
              <path d="M3 3 L35 35 M35 3 L3 35" />
            </svg>
          </button>
        </header>

        <main className="flex flex-col gap-[60px] px-12 pt-5">
          <Section title="Daily Summary">
            <p className="px-12 py-9 text-[41px] leading-[57px]">
              Wind is currently 5 mph from the north-northwest. Today, wind speeds are 2 to 7 mph, with gusts up to
              13&nbsp;mph.
            </p>
          </Section>

          <Section title="Map">
            <WindMap />
          </Section>

          <Section title="Daily Comparison">
            <p className="border-b border-[#3d3c41] px-12 py-9 text-[41px] leading-[57px]">
              The peak gust speed today is lower than yesterday.
            </p>
            <ul className="flex flex-col gap-12 p-12">
              {gusts.map((gust) => (
                <li key={gust.day} className="flex gap-[14px]">
                  <div
                    className={`flex h-[72px] shrink-0 items-center rounded-xl pl-[18px] text-[35px] ${gust.barClass}`}
                    style={{ width: `${(gust.speed / maxGust) * 82.3}%` }}
                  >
                    {gust.day}
                  </div>
                  <span className="text-[49px] leading-[64px] font-semibold whitespace-nowrap">{gust.speed} mph</span>
                </li>
              ))}
            </ul>
          </Section>

          <Section title="About Wind Speed and Gusts">
            <p className="px-12 py-9 text-[41px] leading-[57px]">
              The wind speed is calculated using the average over a short period of time. Gusts are short bursts of wind
              above this average. A gust typically lasts under 20 seconds.
            </p>
          </Section>
        </main>
      </div>

      {/* home indicator */}
      <div className="absolute bottom-6 left-1/2 h-[15px] w-[36%] -translate-x-1/2 rounded-full bg-white" />
    </div>
  );
};

export default App;
